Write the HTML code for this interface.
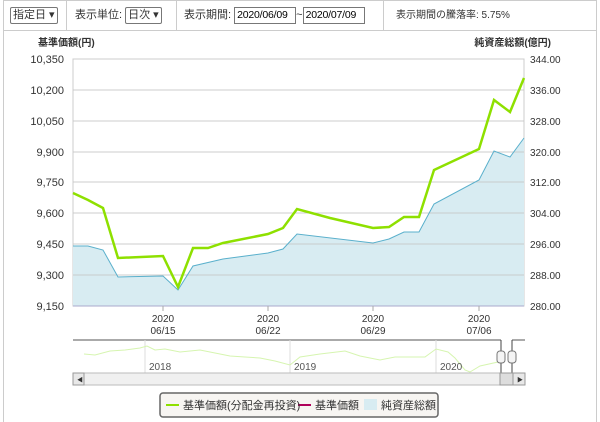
<!DOCTYPE html><html><head><meta charset="utf-8"><style>
body{margin:0;width:600px;height:422px;background:#fff;font-family:"Liberation Sans","Noto Sans CJK JP",sans-serif;font-size:11px;color:#333;position:relative;overflow:hidden}
.hd{position:absolute;top:0;left:3px;width:592px;height:29px;border:1px solid #ccc;border-bottom:1px solid #ccc}
.c{position:absolute;top:0;height:29px;border-right:1px solid #ccc;line-height:29px;white-space:nowrap}
.sel{display:inline-block;border:1px solid #777;border-radius:2px;height:15px;line-height:15px;padding:0 2px;font-size:11px;vertical-align:middle;background:#fff}
.inp{display:inline-block;border:1px solid #777;height:15px;line-height:15px;padding:0 2px;width:56px;vertical-align:middle;font-size:10.5px;color:#000;letter-spacing:-0.2px}
.frame{position:absolute;left:3px;top:30px;width:592px;height:392px;border-left:1px solid #ccc;border-right:1px solid #ccc}
</style></head><body>
<div class="hd">
<div class="c" style="left:0;width:63px;padding-left:6px;box-sizing:border-box"><span class="sel">指定日 ▾</span></div>
<div class="c" style="left:63px;width:110px;padding-left:8px;box-sizing:border-box">表示単位: <span class="sel">日次 ▾</span></div>
<div class="c" style="left:173px;width:207px;padding-left:7px;box-sizing:border-box">表示期間: <span class="inp">2020/06/09</span>~<span class="inp">2020/07/09</span></div>
<div class="c" style="left:381px;width:211px;border:none;padding-left:11px;box-sizing:border-box;font-size:10px">表示期間の騰落率: 5.75%</div>
</div>
<div class="frame"></div>
<svg width="600" height="422" style="position:absolute;left:0;top:0" font-family="Liberation Sans, Noto Sans CJK JP, sans-serif">
<text x="38" y="46" font-size="10" font-weight="bold" fill="#333">基準価額(円)</text>
<text x="551" y="46" font-size="10" font-weight="bold" fill="#333" text-anchor="end">純資産総額(億円)</text>
<g font-size="11" fill="#333" text-anchor="end">
<text x="64" y="63">10,350</text><text x="64" y="94">10,200</text><text x="64" y="125">10,050</text><text x="64" y="156">9,900</text><text x="64" y="186">9,750</text><text x="64" y="217">9,600</text><text x="64" y="248">9,450</text><text x="64" y="279">9,300</text><text x="64" y="310">9,150</text></g>
<g font-size="10" fill="#333">
<text x="530" y="63">344.00</text><text x="530" y="94">336.00</text><text x="530" y="125">328.00</text><text x="530" y="156">320.00</text><text x="530" y="186">312.00</text><text x="530" y="217">304.00</text><text x="530" y="248">296.00</text><text x="530" y="279">288.00</text><text x="530" y="310">280.00</text></g>
<rect x="73" y="59" width="451" height="247" fill="#fff" stroke="#ccc"/>
<polygon fill="#d8ecf2" points="73,246 88,246 103,250 118,277 163,276 178,290 193,266 223,259 253,255 268,253 283,249 297,234 373,243 389,239 404,232 419,232 434,204 479,180 494,151 510,157 524,138 524,306 73,306"/>
<g stroke="#c8c8c8" stroke-width="1" opacity="0.9">
<line x1="73" y1="90" x2="524" y2="90"/><line x1="73" y1="121" x2="524" y2="121"/><line x1="73" y1="152" x2="524" y2="152"/><line x1="73" y1="182" x2="524" y2="182"/><line x1="73" y1="213" x2="524" y2="213"/><line x1="73" y1="244" x2="524" y2="244"/><line x1="73" y1="275" x2="524" y2="275"/></g>
<line x1="73" y1="306" x2="524" y2="306" stroke="#aac" />
<polyline fill="none" stroke="#5ab0cc" stroke-width="1" points="73,246 88,246 103,250 118,277 163,276 178,290 193,266 223,259 253,255 268,253 283,249 297,234 373,243 389,239 404,232 419,232 434,204 479,180 494,151 510,157 524,138"/>
<polyline fill="none" stroke="#8ee000" stroke-width="2.5" points="73,193 88,200 103,208 118,258 163,256 178,287 193,248 208,248 223,243 268,234 283,228 297,209 330,218 373,228 389,227 404,217 419,217 434,170 479,149 494,100 510,112 524,78"/>
<g stroke="#aaa"><line x1="163" y1="306" x2="163" y2="311"/><line x1="268" y1="306" x2="268" y2="311"/><line x1="373" y1="306" x2="373" y2="311"/><line x1="479" y1="306" x2="479" y2="311"/></g>
<g font-size="10" fill="#333" text-anchor="middle">
<text x="163" y="322">2020</text><text x="163" y="334">06/15</text>
<text x="268" y="322">2020</text><text x="268" y="334">06/22</text>
<text x="373" y="322">2020</text><text x="373" y="334">06/29</text>
<text x="479" y="322">2020</text><text x="479" y="334">07/06</text></g>
<line x1="73" y1="340" x2="501" y2="340" stroke="#555"/>
<line x1="512" y1="340" x2="525" y2="340" stroke="#555"/>
<g stroke="#ddd"><line x1="145" y1="340" x2="145" y2="373"/><line x1="290" y1="340" x2="290" y2="373"/><line x1="436" y1="340" x2="436" y2="373"/></g>
<polyline fill="none" stroke="#d6f5b0" stroke-width="1" points="84,354 95,355 110,351 125,350 140,348 147,346 155,350 165,349 180,352 200,350 215,353 230,356 245,357 260,358 275,361 290,365 300,357 320,354 345,351 360,356 380,360 395,357 410,357 425,357 436,349 448,352 455,358 465,370 470,372 480,366 498,362 501,360"/>
<g font-size="10" fill="#555"><text x="149" y="370">2018</text><text x="294" y="370">2019</text><text x="440" y="370">2020</text></g>
<line x1="501" y1="340" x2="501" y2="385" stroke="#444"/><line x1="512" y1="340" x2="512" y2="385" stroke="#444"/>
<rect x="497" y="351" width="8" height="12" rx="3" fill="#f4f4f4" stroke="#777"/>
<rect x="508" y="351" width="8" height="12" rx="3" fill="#f4f4f4" stroke="#777"/>
<rect x="73" y="373" width="452" height="12" fill="#f0f0f0" stroke="#bbb"/>
<rect x="73" y="373" width="11" height="12" fill="#e8e8e8" stroke="#999"/>
<rect x="500" y="373" width="13" height="12" fill="#ddd" stroke="#999"/>
<rect x="513" y="373" width="12" height="12" fill="#e8e8e8" stroke="#999"/>
<text x="77" y="382" font-size="6" fill="#333">◀</text><text x="517" y="382" font-size="6" fill="#333">▶</text>
<rect x="160" y="393" width="278" height="24" rx="3" fill="#f7f5f2" stroke="#666" stroke-width="1.5"/>
<line x1="166" y1="405" x2="179" y2="405" stroke="#8ee000" stroke-width="2"/>
<line x1="298" y1="405" x2="311" y2="405" stroke="#b0005a" stroke-width="2"/>
<rect x="364" y="399" width="13" height="11" fill="#d8ecf2"/>
<g font-size="11" fill="#333"><text x="183" y="409">基準価額(分配金再投資)</text><text x="315" y="409">基準価額</text><text x="381" y="409">純資産総額</text></g>
</svg>
</body></html>
